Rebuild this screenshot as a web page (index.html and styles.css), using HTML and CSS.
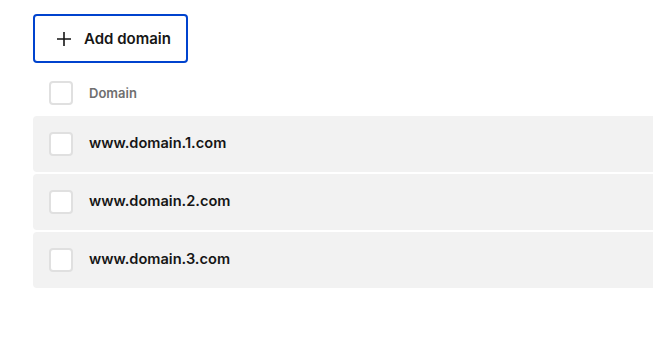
FILE: index.html
```html
<!DOCTYPE html>
<html>
<head>
<meta charset="utf-8">
<link rel="stylesheet" href="styles.css">
</head>
<body>
<div class="page">
  <button class="add-btn">
    <svg class="plus" width="16" height="16" viewBox="0 0 16 16"><path d="M8 1v14M1 8h14" stroke="#161616" stroke-width="1.6" fill="none"/></svg>
    <span>Add domain</span>
  </button>
  <div class="table">
    <div class="head">
      <span class="cb"></span>
      <span class="head-label">Domain</span>
    </div>
    <div class="row"><span class="cb"></span><span class="name">www.domain.1.com</span></div>
    <div class="row"><span class="cb"></span><span class="name">www.domain.2.com</span></div>
    <div class="row"><span class="cb"></span><span class="name">www.domain.3.com</span></div>
  </div>
</div>
</body>
</html>
```
FILE: styles.css
```css
html, body {
  margin: 0;
  padding: 0;
  background: #ffffff;
  overflow: hidden;
}
body {
  font-family: Inter, "Noto Sans", sans-serif;
  color: #161616;
}
.page {
  padding: 14px 0 0 33px;
}
.add-btn {
  display: flex;
  align-items: center;
  gap: 12px;
  box-sizing: border-box;
  height: 49px;
  width: 155px;
  padding: 0 0 0 21px;
  border: 2px solid #0043ce;
  border-radius: 4px;
  background: #ffffff;
  font-family: Inter, "Noto Sans", sans-serif;
  font-size: 15px;
  font-weight: 600;
  color: #161616;
  cursor: pointer;
}
.plus {
  display: block;
  flex: none;
}
.table {
  margin-top: 7px;
  width: calc(100vw - 33px);
}
.head {
  height: 46px;
  display: flex;
  align-items: center;
  padding-left: 16px;
  gap: 16px;
}
.head-label {
  font-size: 13px;
  font-weight: 600;
  color: #6f6f6f;
}
.row {
  height: 56px;
  display: flex;
  align-items: center;
  padding-left: 16px;
  gap: 16px;
  background: #f2f2f2;
  border-radius: 4px 0 0 4px;
  margin-bottom: 2px;
}
.cb {
  box-sizing: border-box;
  width: 24px;
  height: 24px;
  border: 2px solid #e0e0e0;
  border-radius: 4px;
  background: #ffffff;
  flex: none;
}
.name {
  font-size: 14.6px;
  font-weight: 600;
  color: #161616;
  padding-bottom: 3px;
}
```
